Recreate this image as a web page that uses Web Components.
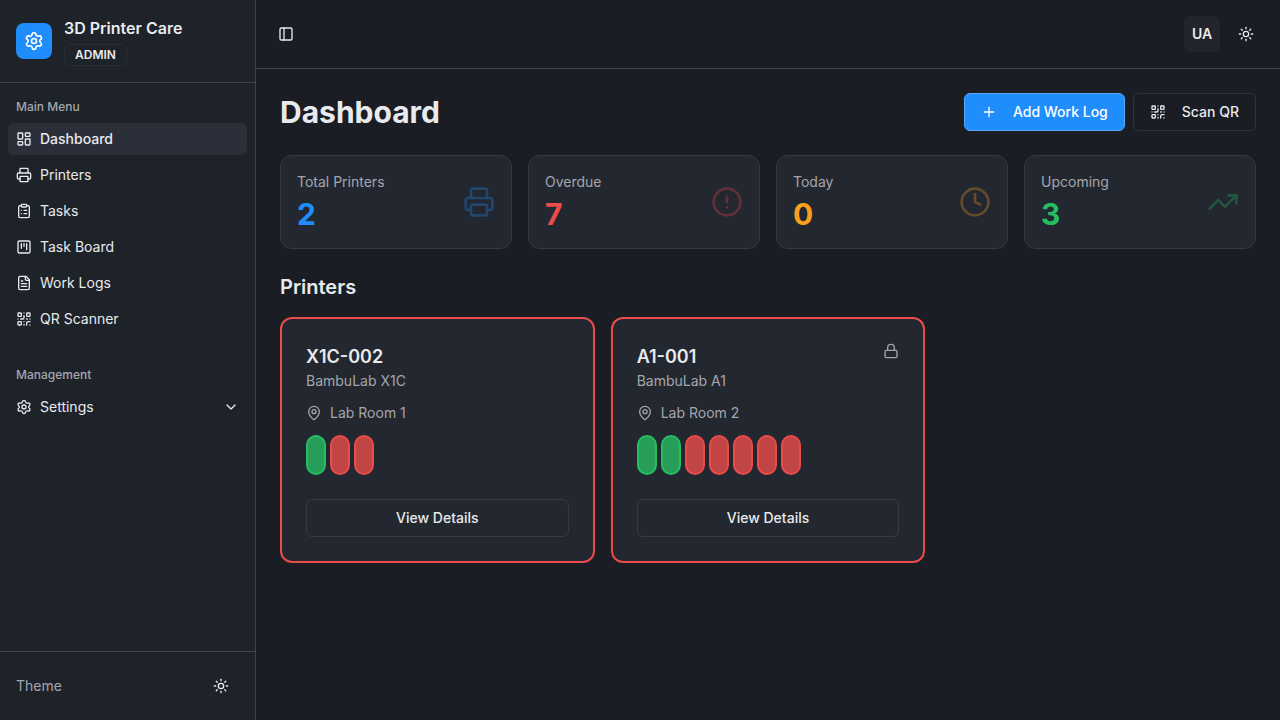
<!DOCTYPE html>
<html lang="en">
<head>
<meta charset="utf-8">
<meta name="viewport" content="width=device-width, initial-scale=1">
<title>3D Printer Care</title>
<style>
:root{
  --bg:#1a1d24; --side:#1e2229; --card:#23272f; --accent:#2b2f3a;
  --line:#40434b; --card-line:#363a42; --text:#e8eaed; --muted:#a3a6ac;
  --blue:#208dfc; --red:#ea4b4b; --amber:#f99f1e; --green:#25bf62;
}
body{margin:0;background:var(--bg);color:var(--text);font-family:Inter,"Liberation Sans",sans-serif;font-size:14px;line-height:20px}
</style>
</head>
<body>
<app-shell>
  <app-sidebar slot="sidebar"></app-sidebar>
  <app-topbar></app-topbar>
  <dashboard-page></dashboard-page>
</app-shell>
<script>
const ICONS = {
  settings:'<path d="M9.671 4.136a2.34 2.34 0 0 1 4.659 0 2.34 2.34 0 0 0 3.319 1.915 2.34 2.34 0 0 1 2.33 4.033 2.34 2.34 0 0 0 0 3.831 2.34 2.34 0 0 1-2.33 4.033 2.34 2.34 0 0 0-3.319 1.915 2.34 2.34 0 0 1-4.659 0 2.34 2.34 0 0 0-3.32-1.915 2.34 2.34 0 0 1-2.33-4.033 2.34 2.34 0 0 0 0-3.831A2.34 2.34 0 0 1 6.35 6.051a2.34 2.34 0 0 0 3.319-1.915"/><circle cx="12" cy="12" r="3"/>',
  dashboard:'<rect width="7" height="9" x="3" y="3" rx="1"/><rect width="7" height="5" x="14" y="3" rx="1"/><rect width="7" height="9" x="14" y="12" rx="1"/><rect width="7" height="5" x="3" y="16" rx="1"/>',
  printer:'<path d="M6 18H4a2 2 0 0 1-2-2v-5a2 2 0 0 1 2-2h16a2 2 0 0 1 2 2v5a2 2 0 0 1-2 2h-2"/><path d="M6 9V3a1 1 0 0 1 1-1h10a1 1 0 0 1 1 1v6"/><rect x="6" y="14" width="12" height="8" rx="1"/>',
  tasks:'<rect width="8" height="4" x="8" y="2" rx="1" ry="1"/><path d="M16 4h2a2 2 0 0 1 2 2v14a2 2 0 0 1-2 2H6a2 2 0 0 1-2-2V6a2 2 0 0 1 2-2h2"/><path d="M12 11h4"/><path d="M12 16h4"/><path d="M8 11h.01"/><path d="M8 16h.01"/>',
  board:'<rect width="18" height="18" x="3" y="3" rx="2"/><path d="M8 7v7"/><path d="M12 7v4"/><path d="M16 7v9"/>',
  file:'<path d="M15 2H6a2 2 0 0 0-2 2v16a2 2 0 0 0 2 2h12a2 2 0 0 0 2-2V7Z"/><path d="M14 2v4a2 2 0 0 0 2 2h4"/><path d="M10 9H8"/><path d="M16 13H8"/><path d="M16 17H8"/>',
  qr:'<rect width="5" height="5" x="3" y="3" rx="1"/><rect width="5" height="5" x="16" y="3" rx="1"/><rect width="5" height="5" x="3" y="16" rx="1"/><path d="M21 16h-3a2 2 0 0 0-2 2v3"/><path d="M21 21v.01"/><path d="M12 7v3a2 2 0 0 1-2 2H7"/><path d="M3 12h.01"/><path d="M12 3h.01"/><path d="M12 16v.01"/><path d="M16 12h1"/><path d="M21 12v.01"/><path d="M12 21v-1"/>',
  chevron:'<path d="m6 9 6 6 6-6"/>',
  sun:'<circle cx="12" cy="12" r="4"/><path d="M12 2v2"/><path d="M12 20v2"/><path d="m4.93 4.93 1.41 1.41"/><path d="m17.66 17.66 1.41 1.41"/><path d="M2 12h2"/><path d="M20 12h2"/><path d="m6.34 17.66-1.41 1.41"/><path d="m19.07 4.93-1.41 1.41"/>',
  panel:'<rect width="18" height="18" x="3" y="3" rx="2"/><path d="M9 3v18"/>',
  plus:'<path d="M5 12h14"/><path d="M12 5v14"/>',
  alert:'<circle cx="12" cy="12" r="10"/><path d="M12 8v4"/><path d="M12 16h.01"/>',
  clock:'<circle cx="12" cy="12" r="10"/><path d="M12 6v6l4 2"/>',
  trend:'<path d="M16 7h6v6"/><path d="m22 7-8.5 8.5-5-5L2 17"/>',
  pin:'<path d="M20 10c0 4.993-5.539 10.193-7.399 11.799a1 1 0 0 1-1.202 0C9.539 20.193 4 14.993 4 10a8 8 0 0 1 16 0"/><circle cx="12" cy="10" r="3"/>',
  lock:'<rect width="18" height="11" x="3" y="11" rx="2" ry="2"/><path d="M7 11V7a5 5 0 0 1 10 0v4"/>'
};

const RESET = `:host,*{box-sizing:border-box}
h1,h2,h3,p,ul{margin:0;padding:0}
ul{list-style:none}
a{color:inherit;text-decoration:none}
button{font:inherit;color:inherit;background:none;border:0;padding:0;cursor:pointer}
button:focus-visible,a:focus-visible{outline:2px solid var(--blue);outline-offset:2px}`;

class Base extends HTMLElement {
  connectedCallback(){
    if (this.shadowRoot) return;
    const t = document.createElement('template');
    t.innerHTML = `<style>${RESET}${this.css()}</style>${this.html()}`;
    this.attachShadow({mode:'open'}).append(t.content.cloneNode(true));
  }
  attr(n){ return this.getAttribute(n) || ''; }
}

customElements.define('ui-icon', class extends Base {
  css(){ return `:host{display:block;flex:none;width:16px;height:16px}svg{display:block;width:100%;height:100%}`; }
  html(){ return `<svg viewBox="0 0 24 24" fill="none" stroke="currentColor" stroke-width="2" stroke-linecap="round" stroke-linejoin="round" aria-hidden="true">${ICONS[this.attr('name')]}</svg>`; }
});

customElements.define('icon-button', class extends Base {
  css(){ return `:host{display:block;flex:none;width:36px;height:36px}
:host([size=small]){width:28px;height:28px}
:host([filled]) button{background:#22252c}
button{width:100%;height:100%;display:flex;align-items:center;justify-content:center;border-radius:6px;font-weight:600}`; }
  html(){ return `<button type="button" aria-label="${this.attr('label')}"><slot></slot></button>`; }
});

customElements.define('ui-button', class extends Base {
  css(){ return `:host{display:block}
button{width:100%;min-height:38px;display:flex;align-items:center;justify-content:center;gap:16px;padding:8px 16px;border:1px solid var(--card-line);border-radius:6px;font-weight:500;white-space:nowrap}
:host([variant=primary]) button{background:var(--blue);border-color:#57a9fb;color:#fff}
:host([variant=outline]) button{border-color:#303338}`; }
  html(){ return `<button type="button"><slot name="icon"></slot><span><slot></slot></span></button>`; }
});

customElements.define('nav-item', class extends Base {
  css(){ return `:host{display:block}
.row{width:100%;height:32px;display:flex;align-items:center;gap:8px;padding:8px;border-radius:6px;text-align:left}
span{flex:1}
:host([active]) .row{background:var(--accent);font-weight:500}`; }
  html(){
    const inner = `<ui-icon name="${this.attr('icon')}"></ui-icon><span><slot></slot></span>`;
    return this.hasAttribute('expandable')
      ? `<button type="button" class="row" aria-expanded="false">${inner}<ui-icon name="chevron"></ui-icon></button>`
      : `<a class="row" href="#${this.attr('icon')}"${this.hasAttribute('active')?' aria-current="page"':''}>${inner}</a>`;
  }
});

customElements.define('nav-group', class extends Base {
  css(){ return `:host{display:block;padding:8px}
h2{height:32px;padding:0 8px;display:flex;align-items:center;font-size:12px;line-height:16px;font-weight:500;color:var(--muted)}
div{display:flex;flex-direction:column;gap:4px}`; }
  html(){ return `<h2>${this.attr('label')}</h2><div><slot></slot></div>`; }
});

customElements.define('app-sidebar', class extends Base {
  css(){ return `:host{display:flex;flex-direction:column;flex:none;width:256px;height:100vh;position:sticky;top:0;background:var(--side);border-right:1px solid var(--line)}
header{display:flex;align-items:center;gap:12px;padding:16px;border-bottom:1px solid var(--line)}
.logo{width:36px;height:36px;border-radius:8px;background:var(--blue);color:#fff;display:flex;align-items:center;justify-content:center}
.logo ui-icon{width:20px;height:20px}
.brand{display:flex;flex-direction:column;align-items:flex-start;gap:4px}
.name{font-size:16px;line-height:24px;font-weight:600}
.badge{padding:2px 10px;border:1px solid #292d33;border-radius:6px;font-size:12px;line-height:16px;font-weight:600}
nav{flex:1;display:flex;flex-direction:column;gap:8px;overflow:auto}
footer{display:flex;align-items:center;justify-content:space-between;padding:16px;border-top:1px solid var(--line);color:var(--muted)}
footer icon-button{color:var(--text)}`; }
  html(){ return `<header><div class="logo"><ui-icon name="settings"></ui-icon></div>
<div class="brand"><span class="name">3D Printer Care</span><span class="badge">ADMIN</span></div></header>
<nav aria-label="Main">
<nav-group label="Main Menu">
<nav-item icon="dashboard" active>Dashboard</nav-item>
<nav-item icon="printer">Printers</nav-item>
<nav-item icon="tasks">Tasks</nav-item>
<nav-item icon="board">Task Board</nav-item>
<nav-item icon="file">Work Logs</nav-item>
<nav-item icon="qr">QR Scanner</nav-item>
</nav-group>
<nav-group label="Management"><nav-item icon="settings" expandable>Settings</nav-item></nav-group>
</nav>
<footer><span>Theme</span><icon-button label="Toggle theme"><ui-icon name="sun"></ui-icon></icon-button></footer>`; }
});

customElements.define('app-topbar', class extends Base {
  css(){ return `:host{display:flex;align-items:center;justify-content:space-between;padding:16px;border-bottom:1px solid var(--line)}
div{display:flex;gap:8px}`; }
  html(){ return `<icon-button size="small" label="Toggle sidebar"><ui-icon name="panel"></ui-icon></icon-button>
<div><icon-button filled label="UA">UA</icon-button><icon-button label="Toggle theme"><ui-icon name="sun"></ui-icon></icon-button></div>`; }
});

customElements.define('app-shell', class extends Base {
  css(){ return `:host{display:flex;min-height:100vh}
main{flex:1;min-width:0}`; }
  html(){ return `<slot name="sidebar"></slot><main><slot></slot></main>`; }
});

customElements.define('stat-card', class extends Base {
  css(){ return `:host{display:flex;align-items:center;justify-content:space-between;padding:16px;background:var(--card);border:1px solid var(--card-line);border-radius:12px}
:host([tone=blue]){--tone:var(--blue)}
:host([tone=red]){--tone:var(--red)}
:host([tone=amber]){--tone:var(--amber)}
:host([tone=green]){--tone:var(--green)}
div{display:flex;flex-direction:column;gap:4px}
.label{color:var(--muted)}
.value{font-size:30px;line-height:36px;font-weight:700;color:var(--tone)}
ui-icon{width:32px;height:32px;color:var(--tone);opacity:.3}`; }
  html(){ return `<div><p class="label">${this.attr('label')}</p><p class="value">${this.attr('value')}</p></div><ui-icon name="${this.attr('icon')}"></ui-icon>`; }
});

customElements.define('task-pill', class extends Base {
  css(){ return `:host{display:block;width:20px;height:40px;border-radius:10px;border:2px solid var(--red);background:#c14545}
:host([state=ok]){border-color:var(--green);background:#279d5a}`; }
  html(){ return ''; }
});

customElements.define('printer-card', class extends Base {
  css(){ return `:host{display:block;padding:24px;background:var(--card);border:2px solid var(--red);border-radius:12px}
header{display:flex;justify-content:space-between;align-items:flex-start}
h3{font-size:18px;line-height:28px;font-weight:600}
p,header ui-icon{color:var(--muted)}
.place{display:flex;align-items:center;gap:8px;margin:12px 0}
.pills{display:flex;flex-wrap:wrap;gap:4px;margin-bottom:24px}`; }
  html(){
    const ok = +this.attr('ok'), late = +this.attr('late');
    return `<header><div><h3>${this.attr('name')}</h3><p>${this.attr('model')}</p></div>${this.hasAttribute('locked')?'<ui-icon name="lock"></ui-icon>':''}</header>
<p class="place"><ui-icon name="pin"></ui-icon><span>${this.attr('place')}</span></p>
<div class="pills">${'<task-pill state="ok"></task-pill>'.repeat(ok)}${'<task-pill></task-pill>'.repeat(late)}</div>
<ui-button>View Details</ui-button>`;
  }
});

customElements.define('dashboard-page', class extends Base {
  css(){ return `:host{display:flex;flex-direction:column;gap:24px;padding:24px}
.head{display:flex;align-items:center;justify-content:space-between;flex-wrap:wrap;gap:8px}
.actions{display:flex;gap:8px}
h1{font-size:30px;line-height:36px;font-weight:700}
h2{font-size:20px;line-height:28px;font-weight:600}
.stats{display:grid;grid-template-columns:repeat(4,1fr);gap:16px}
section{display:flex;flex-direction:column;gap:16px}
.cards{display:grid;grid-template-columns:repeat(3,1fr);gap:16px}
@media(max-width:900px){.stats{grid-template-columns:repeat(2,1fr)}.cards{grid-template-columns:1fr}}`; }
  html(){ return `<div class="head"><h1>Dashboard</h1><div class="actions">
<ui-button variant="primary"><ui-icon slot="icon" name="plus"></ui-icon>Add Work Log</ui-button>
<ui-button variant="outline"><ui-icon slot="icon" name="qr"></ui-icon>Scan QR</ui-button></div></div>
<div class="stats">
<stat-card label="Total Printers" value="2" icon="printer" tone="blue"></stat-card>
<stat-card label="Overdue" value="7" icon="alert" tone="red"></stat-card>
<stat-card label="Today" value="0" icon="clock" tone="amber"></stat-card>
<stat-card label="Upcoming" value="3" icon="trend" tone="green"></stat-card>
</div>
<section><h2>Printers</h2><div class="cards">
<printer-card name="X1C-002" model="BambuLab X1C" place="Lab Room 1" ok="1" late="2"></printer-card>
<printer-card name="A1-001" model="BambuLab A1" place="Lab Room 2" ok="2" late="5" locked></printer-card>
</div></section>`; }
});
</script>
</body>
</html>
